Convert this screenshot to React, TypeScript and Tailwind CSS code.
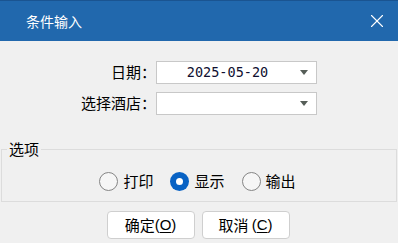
import { X } from 'lucide-react'

const cjk = { fontFamily: '"Noto Sans CJK SC", "Liberation Sans", sans-serif' }

function Select({ value }: { value?: string }) {
  return (
    <div className="flex h-[23px] w-[161px] items-center border border-[#c8c8c8] bg-white">
      <div className="flex-1 pl-[6px] text-center text-[13.5px] leading-none text-[#101030]" style={{ fontFamily: '"DejaVu Sans Mono", monospace' }}>
        {value}
      </div>
      <div className="flex w-[24px] justify-center">
        <div className="h-0 w-0 border-x-[4px] border-t-[5px] border-x-transparent border-t-[#565e58]" />
      </div>
    </div>
  )
}

function Radio({ label, checked }: { label: string; checked?: boolean }) {
  return (
    <div className="flex items-center gap-[5px]">
      {checked ? (
        <div className="flex h-[19px] w-[19px] items-center justify-center rounded-full bg-[#0862c4]">
          <div className="h-[7px] w-[7px] rounded-full bg-white" />
        </div>
      ) : (
        <div className="h-[19px] w-[19px] rounded-full border border-[#858585] bg-[#f6f6f6]" />
      )}
      <span className="text-[15px] text-black">{label}</span>
    </div>
  )
}

function Button({ text, hot, space }: { text: string; hot: string; space?: boolean }) {
  return (
    <button className="flex h-[28px] w-[88px] items-center justify-center rounded-[4px] border border-[#cfcfcf] bg-white text-[15px] text-black">
      <span className="whitespace-pre">{text}{space ? ' ' : ''}</span>
      <span style={{ fontFamily: '"Liberation Sans", sans-serif' }}>
        (<span className="underline underline-offset-2">{hot}</span>)
      </span>
    </button>
  )
}

export default function App() {
  return (
    <div className="flex h-[243px] w-[398px] flex-col bg-[#f0f0f0]" style={cjk}>
      <div className="flex h-[41px] items-center justify-between border-t border-[#1a5491] bg-[#2168ad] pl-[26px] pr-[10px] text-white">
        <span className="text-[14px]">条件输入</span>
        <X className="h-[22px] w-[22px]" strokeWidth={1.2} />
      </div>

      <div className="mt-[20px] flex flex-col gap-[8px] pl-[60px]">
        <div className="flex items-center">
          <span className="w-[96px] text-right text-[15px] text-black">日期：</span>
          <Select value="2025-05-20" />
        </div>
        <div className="flex items-center">
          <span className="w-[96px] text-right text-[15px] text-black">选择酒店：</span>
          <Select />
        </div>
      </div>

      <fieldset className="mx-[1px] mt-[23px] h-[64px] border border-[#dcdcdc] px-[5px]">
        <legend className="px-[2px] text-[15px] leading-[22px] text-black">选项</legend>
        <div className="mt-[10px] flex justify-center gap-[17px] pr-[3px]">
          <Radio label="打印" />
          <Radio label="显示" checked />
          <Radio label="输出" />
        </div>
      </fieldset>

      <div className="mt-[9px] flex justify-center gap-[7px] pr-[2px]">
        <Button text="确定" hot="O" />
        <Button text="取消" hot="C" space />
      </div>
    </div>
  )
}
